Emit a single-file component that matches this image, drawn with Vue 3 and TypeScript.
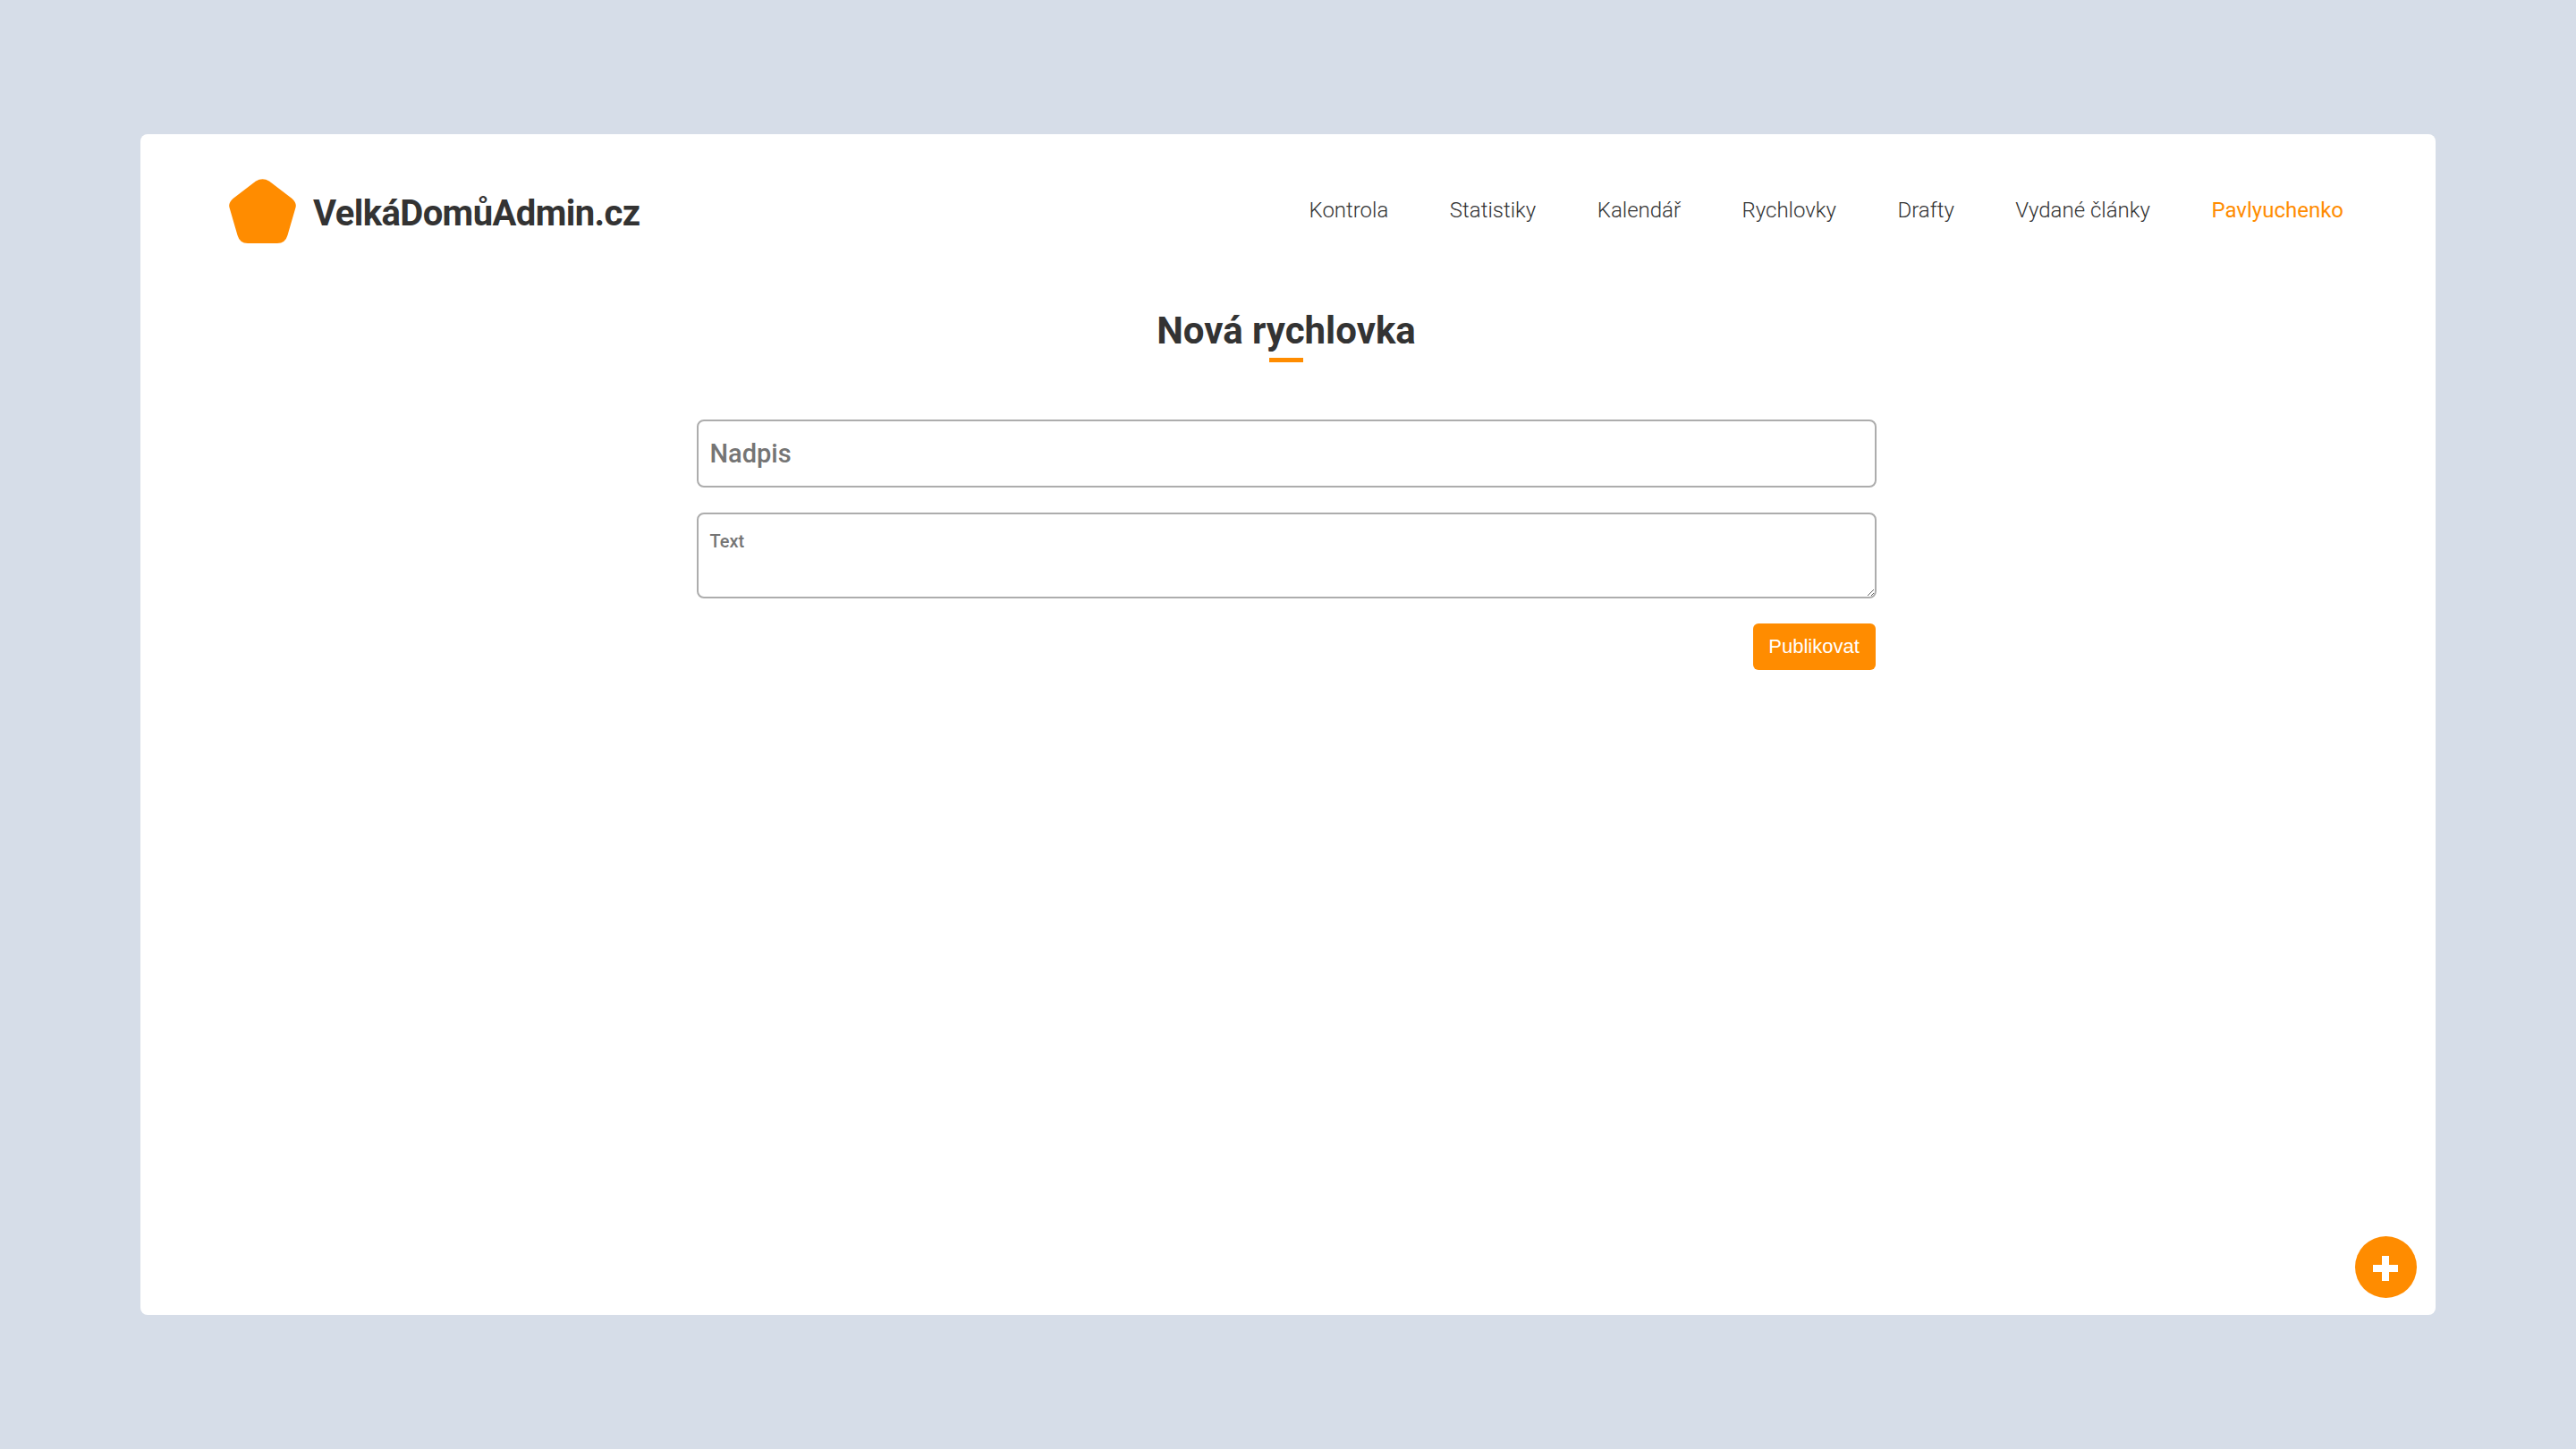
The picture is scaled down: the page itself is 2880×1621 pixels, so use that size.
<template>
  <div class="page">
    <div class="card">
      <header class="header">
        <a class="brand" href="#">
          <svg class="logo" viewBox="0 0 75 72" aria-hidden="true">
            <path d="M30 2.5Q37.5-2 45 2.5L70.5 22Q76 27 74.5 32L65.5 63Q63 72 54 72L21 72Q12 72 9.5 63L.5 32Q-1 27 4.500 22Z" />
          </svg>
          <span class="brand-name">VelkáDomůAdmin.cz</span>
        </a>
        <nav class="nav">
          <a
            v-for="item in navItems"
            :key="item"
            href="#"
            class="nav-link"
            :class="{ active: item === activeUser }"
          >{{ item }}</a>
        </nav>
      </header>

      <main class="content">
        <h1 class="title">Nová rychlovka</h1>
        <form class="form" @submit.prevent>
          <input v-model="heading" class="heading-input" type="text" placeholder="Nadpis" />
          <textarea v-model="body" class="text-input" placeholder="Text"></textarea>
          <div class="actions">
            <button type="submit" class="publish">Publikovat</button>
          </div>
        </form>
      </main>

      <button class="fab" type="button" aria-label="Přidat">
        <svg viewBox="0 0 28 28" aria-hidden="true">
          <path d="M10 0h8v10h10v8H18v10h-8V18H0v-8h10z" />
        </svg>
      </button>
    </div>
  </div>
</template>

<script setup lang="ts">
import { ref } from "vue";

const activeUser = "Pavlyuchenko";
const navItems: string[] = [
  "Kontrola",
  "Statistiky",
  "Kalendář",
  "Rychlovky",
  "Drafty",
  "Vydané články",
  activeUser,
];

const heading = ref<string>("");
const body = ref<string>("");
</script>

<style scoped>
.page {
  box-sizing: border-box;
  height: 1620px;
  padding: 150px 157px;
  background-color: #d6dde8;
  font-family: Roboto, "Noto Sans", sans-serif;
}

.card {
  position: relative;
  height: 1320px;
  background-color: #fff;
  border-radius: 8px;
}

.header {
  display: flex;
  align-items: center;
  justify-content: space-between;
  padding: 50px 103px 0 99px;
}

.brand {
  display: flex;
  align-items: center;
  gap: 19px;
  text-decoration: none;
  color: #333;
}

.logo {
  display: block;
  width: 75px;
  height: 72px;
  overflow: visible;
  fill: #ff8c00;
}

.brand-name {
  padding-top: 5px;
  font-size: 40px;
  font-weight: 700;
  letter-spacing: -0.6px;
}

.nav {
  display: flex;
  gap: 68.5px;
  margin-top: -2px;
}

.nav-link {
  font-size: 24px;
  font-weight: 300;
  color: #333;
  text-decoration: none;
}

.nav-link.active {
  color: #ff8c00;
  font-weight: 400;
}

.content {
  display: flex;
  flex-direction: column;
  align-items: center;
  padding-right: 4px;
}

.title {
  position: relative;
  margin: 69px 0 0;
  font-size: 42px;
  line-height: 58px;
  font-weight: 700;
  color: #333;
}

.title::after {
  content: "";
  position: absolute;
  left: 50%;
  bottom: -6px;
  width: 38px;
  height: 5px;
  margin-left: -19px;
  background-color: #ff8c00;
}

.form {
  display: flex;
  flex-direction: column;
  width: 1319px;
  margin-top: 70px;
}

.heading-input,
.text-input {
  box-sizing: border-box;
  width: 100%;
  border: 2px solid #adadad;
  border-radius: 8px;
  background-color: #fff;
  font-family: inherit;
  color: #333;
  outline: none;
}

.heading-input {
  height: 76px;
  padding: 0 13px;
  font-size: 29px;
  font-weight: 500;
}

.text-input {
  display: block;
  height: 96px;
  margin-top: 28px;
  padding: 18px 13px;
  font-size: 20px;
  font-weight: 500;
}

.actions {
  display: flex;
  justify-content: flex-end;
  margin-top: 28px;
  padding-right: 1px;
}

.publish {
  width: 137px;
  height: 52px;
  padding: 0;
  border: none;
  border-radius: 6px;
  background-color: #ff8c00;
  color: #fff;
  font-family: "Liberation Sans", Arial, sans-serif;
  font-size: 22px;
  cursor: pointer;
}

.fab {
  position: absolute;
  right: 21px;
  bottom: 19px;
  display: flex;
  align-items: center;
  justify-content: center;
  width: 69px;
  height: 69px;
  padding: 0;
  border: none;
  border-radius: 50%;
  background-color: #ff8c00;
  cursor: pointer;
}

.fab svg {
  width: 28px;
  height: 28px;
  margin: 2px 1px 0 0;
  fill: #fff;
}
</style>
